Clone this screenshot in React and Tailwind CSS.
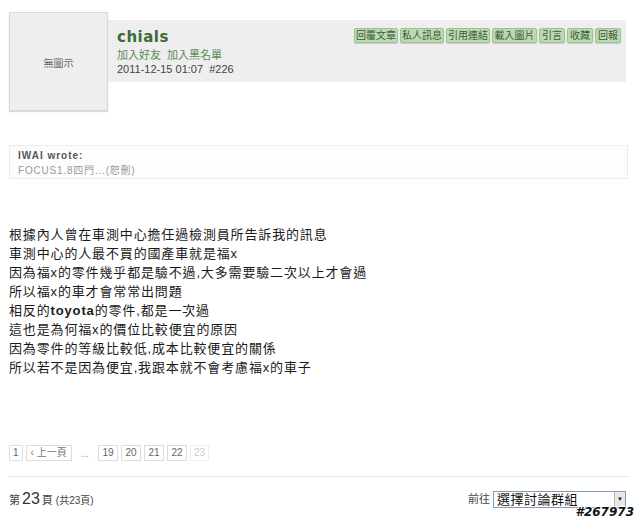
export default function App() {
  const font = { fontFamily: '"Liberation Sans", Arial, "Noto Sans CJK TC", sans-serif' };
  const btns = [
    ["回覆文章", "w-[44px]"],
    ["私人訊息", "w-[44px]"],
    ["引用連結", "w-[44px]"],
    ["載入圖片", "w-[45px]"],
    ["引言", "w-[26px]"],
    ["收藏", "w-[26px]"],
    ["回報", "w-[26px]"],
  ];
  const lines = [
    "根據內人曾在車測中心擔任過檢測員所告訴我的訊息",
    "車測中心的人最不買的國產車就是福x",
    "因為福x的零件幾乎都是驗不過,大多需要驗二次以上才會過",
    "所以福x的車才會常常出問題",
    null,
    "這也是為何福x的價位比較便宜的原因",
    "因為零件的等級比較低,成本比較便宜的關係",
    "所以若不是因為便宜,我跟本就不會考慮福x的車子",
  ];
  return (
    <div className="w-[640px] h-[521px] bg-white relative overflow-hidden text-[#333]" style={font}>
      <div className="pt-[12px] pl-[9px] pr-[14px] flex">
        <div className="w-[99px] h-[99px] bg-[#eeeeee] border border-[#d8d8d8] shadow-[0_1px_1px_rgba(0,0,0,0.15)] flex items-center justify-center text-[10px] text-[#666] shrink-0 pt-[3px]">
          無圖示
        </div>
        <div className="mt-[8px] h-[62px] flex-1 bg-[#eeeeee] flex justify-between pl-[9px] pr-[5px]">
          <div className="pt-[8px]">
            <div className="text-[15px] font-bold leading-[18px] text-[#3d6b35] tracking-[0.5px]" style={{ fontFamily: '"DejaVu Sans", Verdana, sans-serif' }}>chials</div>
            <div className="text-[11px] leading-[14px] text-[#5b8a55] mt-[2px]">加入好友&nbsp;&nbsp;加入黑名單</div>
            <div className="text-[11px] leading-[14px] text-[#444]">2011-12-15 01:07&nbsp;&nbsp;#226</div>
          </div>
          <div className="flex gap-[2px] pt-[8px] items-start">
            {btns.map(([b, w]) => (
              <div key={b} className={`${w} h-[15px] text-center rounded-[2px] bg-[#bcd9b4] border border-[#9cc395] text-[10px] leading-[13px] text-[#3d5a37] shadow-[0_1px_1px_rgba(0,0,0,0.15)]`}>
                {b}
              </div>
            ))}
          </div>
        </div>
      </div>

      <div className="mx-[9px] mt-[34px] w-[619px] h-[34px] border border-[#ebebeb] bg-[#fdfdfd] pl-[8px] pt-[3px]">
        <div className="text-[10px] font-bold leading-[14px] text-[#555] tracking-[1px]">IWAI wrote:</div>
        <div className="text-[10px] leading-[15px] text-[#999] tracking-[0.8px]">FOCUS1.8四門...(恕刪)</div>
      </div>

      <div className="ml-[9px] mt-[46px] text-[13px] leading-[19px] tracking-[0.85px] text-[#1a1a1a]">
        {lines.map((l, i) =>
          l === null ? (
            <div key={i}>相反的<b>toyota</b>的零件,都是一次過</div>
          ) : (
            <div key={i}>{l}</div>
          )
        )}
      </div>

      <div className="ml-[9px] mt-[68px] flex items-center text-[10px] text-[#666] h-[16px]">
        <div className="h-[16px] px-[3px] border border-[#ddd] leading-[14px]">1</div>
        <div className="h-[16px] px-[4px] border border-[#ddd] leading-[14px] ml-[3px] text-[#777]">‹ 上一頁</div>
        <div className="ml-[9px] mr-[9px] text-[#999]">...</div>
        {["19", "20", "21", "22"].map((n) => (
          <div key={n} className="h-[16px] w-[20px] text-center border border-[#ddd] leading-[14px] mr-[3px]">{n}</div>
        ))}
        <div className="h-[16px] w-[19px] text-center border border-[#eee] leading-[14px] text-[#ccc]">23</div>
      </div>

      <div className="mx-[9px] mt-[15px] h-px w-[619px] bg-[#e6e6e6]" />

      <div className="mx-[9px] mt-[10px] flex items-center justify-between w-[617px]">
        <div className="text-[11px] text-[#444] flex items-baseline">
          第 <span className="text-[16px] mx-[2px] text-[#333]">23</span> 頁 <span className="text-[10px] ml-[3px]">(共23頁)</span>
        </div>
        <div className="flex items-center text-[11px] text-[#444]">
          <span className="mr-[3px]">前往</span>
          <div className="w-[133px] h-[17px] border border-[#7f9db9] bg-white flex items-center justify-between">
            <span className="text-[13px] pl-[3px] text-[#111] leading-[15px] tracking-[0.5px]">選擇討論群組</span>
            <div className="w-[11px] h-[15px] bg-[#e8e8e8] border-l border-[#bbb] flex items-center justify-center text-[6px] text-[#222]">▼</div>
          </div>
        </div>
      </div>

      <div
        className="absolute right-[6px] bottom-[2px] text-[12px] font-bold italic leading-[13px] text-[#111]"
        style={{ fontFamily: '"DejaVu Sans", sans-serif', textShadow: "1px 0 #fff, -1px 0 #fff, 0 1px #fff, 0 -1px #fff" }}
      >
        #267973
      </div>
    </div>
  );
}
